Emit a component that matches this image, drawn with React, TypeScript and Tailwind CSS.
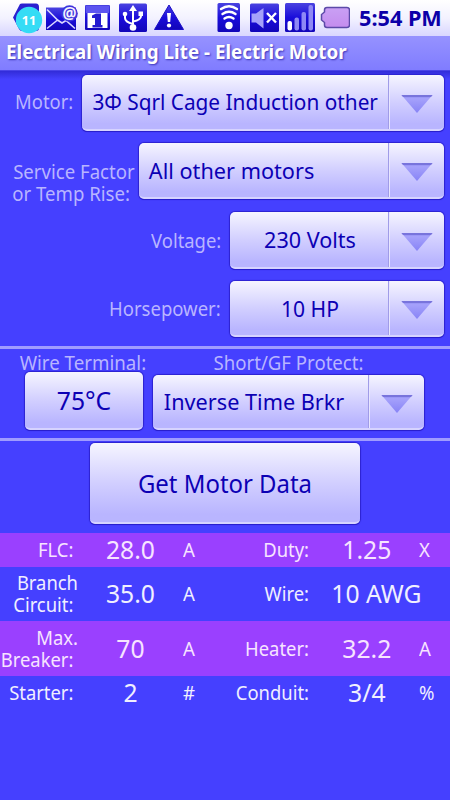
import clsx from "clsx";
import type { ReactNode } from "react";

const FACE = "bg-linear-to-b from-[#f6f5ff] via-[#d2cfff] via-50% to-[#b9b5ff] to-90%";

type ButtonProps = {
  label: string;
  className: string;
  textClass: string;
  spinner?: boolean;
};

function Arrow() {
  return (
    <svg className="block h-[18px] w-8" viewBox="0 0 32 18">
      <defs>
        <linearGradient id="arrow" x1="0" y1="0" x2="0" y2="1">
          <stop offset="0" stopColor="#8581ee" />
          <stop offset="0.2" stopColor="#a5a1fb" />
          <stop offset="1" stopColor="#8783f6" />
        </linearGradient>
      </defs>
      <path d="M.5 0H31.500L16 18Z" fill="url(#arrow)" />
      <path d="M.5 0H31.500L30 2H2Z" fill="#7874dc" />
    </svg>
  );
}

function Button({ label, className, textClass, spinner }: ButtonProps) {
  return (
    <button
      className={clsx(
        "flex shrink-0 overflow-hidden rounded-[5px] border-b-2 border-[#d6d3ff] text-[#0c00b4] shadow-[0_0_1px_1px_#2c22d0,0_1px_0_0_#1a0cb8]",
        FACE,
        className
      )}
    >
      <span className={clsx("flex h-full min-w-0 flex-1 items-center whitespace-nowrap", textClass)}>
        <span className="block">{label}</span>
      </span>
      {spinner && (
        <span className="flex h-full w-[56px] shrink-0 items-center justify-center border-l border-[#a09ce8] pt-1 shadow-[inset_1px_0_0_#e8e6ff]">
          <Arrow />
        </span>
      )}
    </button>
  );
}

function Label({ children, className }: { children: ReactNode; className?: string }) {
  return (
    <div className={clsx("shrink-0 whitespace-nowrap text-[20px] leading-[22px] text-[#b9b5ff]", className)}>
      {children}
    </div>
  );
}

function StatusBar() {
  return (
    <header className="flex h-9 shrink-0 items-start bg-linear-to-b from-white via-[#f3f2ff] to-[#d9d6ff]">
      <svg className="block h-9 w-[350px] shrink-0" viewBox="0 0 350 36">
        <defs>
          <linearGradient id="tile" x1="0" y1="0" x2="0" y2="1">
            <stop offset="0" stopColor="#4a43e0" />
            <stop offset="0.5" stopColor="#1a0ddb" />
            <stop offset="1" stopColor="#1206b8" />
          </linearGradient>
          <linearGradient id="cell" x1="0" y1="0" x2="0" y2="1">
            <stop offset="0" stopColor="#c9a0f4" />
            <stop offset="1" stopColor="#c48cee" />
          </linearGradient>
        </defs>

        {/* battery percentage */}
        <path d="M13 17.500L20 4Q20.500 3.500 22 3.500H36Q39 3.500 39 7V28Q39 31 36 31H22Q20 31 19 29Z" fill="#2a20d0" />
        <circle cx="29" cy="20" r="13.200" fill="#35dcf5" />
        <text x="29" y="25" textAnchor="middle" fontSize="12.500" fontWeight="700" fill="#fff" fontFamily="Noto Sans">11</text>

        {/* mail */}
        <path d="M46 7.500H76V30H46Z" fill="url(#tile)" />
        <path d="M47 9.500L57.500 20L47 28.500M57.500 20L62 23L66 20.500L75 28.500" fill="none" stroke="#d9d7ff" strokeWidth="1.600" />
        <circle cx="69.500" cy="13.500" r="8.300" fill="#3c34dc" />
        <text x="69.500" y="18.500" textAnchor="middle" fontSize="15.500" fontWeight="700" fill="#f3f2ff" fontFamily="Noto Sans">@</text>

        {/* calendar */}
        <rect x="85" y="5" width="25" height="25" rx="1" fill="url(#tile)" />
        <rect x="86" y="6" width="23" height="7" fill="#5c54f0" />
        <rect x="87.500" y="13" width="20" height="15" fill="#fff" />
        <path d="M92 15.500L96 13.500H101V25H102.500V27.500H92.500V25H95V18H92Z" fill="#241ad0" />

        {/* usb */}
        <rect x="119" y="3.500" width="28" height="28.500" rx="1.500" fill="url(#tile)" />
        <g fill="none" stroke="#fff" strokeWidth="2">
          <path d="M133 8V27M133 24Q125 22 125 18V15M133 21.500Q141 20 141 16V14" />
        </g>
        <path d="M133 5L137 11H129Z" fill="#fff" />
        <circle cx="133" cy="27.500" r="3.300" fill="#fff" />
        <circle cx="125" cy="14" r="2.300" fill="#fff" />
        <rect x="138.500" y="11.500" width="4.500" height="4.500" fill="#fff" />

        {/* warning */}
        <path d="M169 5L183.500 29.500H154.500Z" fill="url(#tile)" stroke="#1a0dc8" strokeLinejoin="round" />
        <path d="M167 13H171L170.200 22H167.800Z" fill="#fff" />
        <circle cx="169" cy="25.500" r="2.100" fill="#fff" />

        {/* wifi */}
        <rect x="217.500" y="3" width="22.500" height="29" rx="1.500" fill="url(#tile)" />
        <g fill="none" stroke="#fff" strokeWidth="2.400" strokeLinecap="round">
          <path d="M221 9Q229 3.500 237 9M222.500 14Q229 9.500 235.500 14M224.500 18.500Q229 15.500 233.500 18.500" />
        </g>
        <circle cx="229" cy="25.500" r="3.700" fill="#fff" />

        {/* muted */}
        <rect x="250" y="3.500" width="29" height="28.500" rx="1.500" fill="url(#tile)" />
        <path d="M251.500 13.500H256L263.500 8V28.500L256 22.500H251.500Z" fill="#a5a1fa" />
        <path d="M267 13L276 22.500M276 13L267 22.500" stroke="#fff" strokeWidth="2.400" />

        {/* signal */}
        <rect x="285" y="3" width="30" height="29" rx="1.500" fill="url(#tile)" />
        <rect x="287.500" y="21" width="4.500" height="9.500" rx="2" fill="#fff" />
        <rect x="294.500" y="17.500" width="4.500" height="13" rx="2" fill="#8e88f5" />
        <rect x="301.500" y="12" width="4.500" height="18.500" rx="2" fill="#8e88f5" />
        <rect x="308.500" y="5" width="4.500" height="25.500" rx="2" fill="#8e88f5" />

        {/* battery */}
        <path
          d="M327 7.500H347Q349.500 7.500 349.500 10V25Q349.500 27.500 347 27.500H327Q324.500 27.500 324.500 25V22.500L321.500 20V14.500L324.500 12V10Q324.500 7.500 327 7.500Z"
          fill="url(#cell)"
          stroke="#5c4aa8"
          strokeWidth="1.500"
        />
      </svg>
      <time className="ml-[9px] origin-left scale-x-[0.985] whitespace-nowrap text-[22px] leading-[35px] font-bold text-[#0c00a8]">
        5:54 PM
      </time>
    </header>
  );
}

type Row = {
  height: string;
  bg: string;
  // the first name may take two lines
  cells: [string[], string, string, string, string, string];
};

const rows: Row[] = [
  { height: "h-[34px]", bg: "bg-[#9a40ff] text-[#f7e4ff]", cells: [["FLC:"], "28.0", "A", "Duty:", "1.25", "X"] },
  { height: "h-[54px]", bg: "text-[#f0efff]", cells: [["Branch", "Circuit:"], "35.0", "A", "Wire:", "10 AWG", ""] },
  { height: "h-[55px]", bg: "bg-[#9a40ff] text-[#f7e4ff]", cells: [["Max.", "Breaker:"], "70", "A", "Heater:", "32.2", "A"] },
  { height: "h-[34px]", bg: "text-[#f0efff]", cells: [["Starter:"], "2", "#", "Conduit:", "3/4", "%"] },
];

function ResultRow({ height, bg, cells }: Row) {
  const [nameA, valueA, unitA, nameB, valueB, unitB] = cells;
  const name = "origin-right scale-x-[0.92] whitespace-nowrap text-[20px] leading-[22px]";
  const value = "flex h-8 scale-x-[0.95] justify-center whitespace-nowrap text-[26px] leading-[31px]";
  const unit = "origin-left scale-x-[0.93] text-[20px] leading-[22px]";
  return (
    <div className={clsx("flex shrink-0 items-center", height, bg)}>
      <div className={clsx("flex w-[78px] flex-col items-end", name)}>
        {nameA.map((line, i) => (
          <span key={line} className={clsx("block", i === nameA.length - 1 && "pr-[5px]")}>
            {line}
          </span>
        ))}
      </div>
      <div className={clsx("w-[105px]", value)}>{valueA}</div>
      <div className={clsx("w-[32px]", unit)}>{unitA}</div>
      <div className={clsx("w-[94px] text-right", name)}>{nameB}</div>
      <div className={clsx("w-[110px]", value, unitB === "" ? "pl-[26px]" : "pl-[6px]")}>{valueB}</div>
      <div className={clsx("w-[30px]", unit)}>{unitB}</div>
    </div>
  );
}

export default function App() {
  return (
    <div className="flex h-[800px] w-[450px] flex-col overflow-hidden bg-[#4540ff] font-['Noto_Sans',sans-serif]">
      <StatusBar />
      <div className="flex h-[35px] shrink-0 items-center border-b border-[#4a44e8] bg-linear-to-b from-[#9692ff] to-[#807cff] pl-[6px]">
        <h1 className="origin-left scale-x-[0.99] whitespace-nowrap pb-0.5 text-[19px] leading-7 font-bold text-white [text-shadow:1px_1px_2px_#3c34b8]">
          Electrical Wiring Lite - Electric Motor
        </h1>
      </div>

      <div className="flex h-[275px] shrink-0 flex-col items-end gap-3 bg-linear-to-b from-[#322cd8] via-[#4540ff] via-3% to-[#4540ff] pt-[4px] pr-[6px]">
        <div className="flex items-center">
          <Label className="mr-[9px] origin-right scale-x-[0.92] pb-0.5">Motor:</Label>
          <Button label="3Φ Sqrl Cage Induction other" className="h-[56px] w-[362px]" textClass="origin-left scale-x-[0.945] pl-[11px] pb-0.5 text-[22px]" spinner />
        </div>
        <div className="flex h-[57px] items-start">
          <Label className="mt-[18px] mr-[4px] origin-right scale-x-[0.93]">
            <span className="block">Service Factor</span>
            <span className="-ml-px block">or Temp Rise:</span>
          </Label>
          <Button label="All other motors" className="h-[56px] w-[305px]" textClass="origin-left scale-x-[0.985] pl-[10px] text-[22px]" spinner />
        </div>
        <div className="flex items-center">
          <Label className="mr-[9px] origin-right scale-x-[0.92]">Voltage:</Label>
          <Button label="230 Volts" className="h-[57px] w-[214px]" textClass="scale-x-[0.98] justify-center pl-0.5 text-[22px]" spinner />
        </div>
        <div className="flex items-center">
          <Label className="mr-[9px] origin-right scale-x-[0.925]">Horsepower:</Label>
          <Button label="10 HP" className="h-[56px] w-[214px]" textClass="scale-x-[0.96] justify-center pl-0.5 text-[22px]" spinner />
        </div>
      </div>

      <div className="flex h-[95px] shrink-0 flex-col border-y-[3px] border-[#a09cff]">
        <div className="flex h-[23px] shrink-0 pt-[3px]">
          <Label className="w-[194px] origin-left scale-x-[0.935] pl-[21px]">Wire Terminal:</Label>
          <Label className="origin-left scale-x-[0.93] pl-[21px]">Short/GF Protect:</Label>
        </div>
        <div className="flex items-end pl-[25px]">
          <Button label="75°C" className="h-[58px] w-[118px]" textClass="scale-x-[0.95] justify-center text-[26px]" />
          <Button label="Inverse Time Brkr" className="ml-[10px] h-[55px] w-[271px]" textClass="origin-left scale-x-[0.985] pl-[11px] text-[22px]" spinner />
        </div>
      </div>

      <div className="flex h-[92px] shrink-0 items-start justify-center pt-[2px]">
        <Button label="Get Motor Data" className="h-[81px] w-[270px]" textClass="scale-x-[0.92] justify-center pt-[2px] text-[26px]" />
      </div>

      {rows.map((row) => (
        <ResultRow key={row.cells[3]} {...row} />
      ))}
    </div>
  );
}
